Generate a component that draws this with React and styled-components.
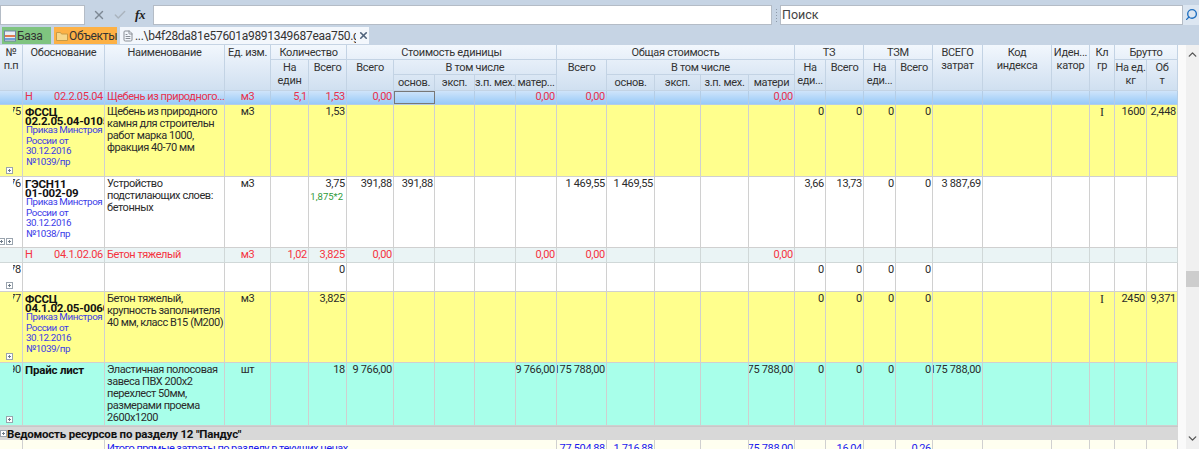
import React from "react";
import styled, { createGlobalStyle } from "styled-components";
import { X, Check, Search, ChevronUp, ChevronDown, FileText } from "lucide-react";

const COLUMNS = [23, 82, 120, 46, 38, 38, 47, 41, 40, 41, 41, 50, 48, 46, 48, 46, 31, 38, 32, 37, 50, 69, 38, 25, 32, 31];
const GRID = COLUMNS.map((w) => `${w}px`).join(" ");

const CLASS_COL = 23;

const TONES = {
  selected: { bg: "linear-gradient(#cfe4fa, #98caf8)", color: "#e8304c", line: "#b4cde6" },
  yellow: { bg: "#ffff8d", color: "#2b2b2b", line: "#d0d0d0" },
  white: { bg: "#fff", color: "#2b2b2b", line: "#d0d0d0" },
  pale: { bg: "#eaf4f5", color: "#f5333f", line: "#d0d8d8" },
  teal: { bg: "#a8ffea", color: "#2b2b2b", line: "#cfcfcf" },
  total: { bg: "#fffff0", color: "#1a1aee", line: "#d0d0d0" },
};

const ROWS = [
  {
    tone: "selected",
    height: 14,
    flagged: "02.2.05.04",
    name: "Щебень из природного...",
    nowrap: true,
    unit: "м3",
    values: { 4: "5,1", 5: "1,53", 6: "0,00", 10: "0,00", 11: "0,00", 15: "0,00" },
    focus: 7,
  },
  {
    tone: "yellow",
    height: 72,
    num: "775",
    plus: 1,
    code: ["ФССЦ", "02.2.05.04-0105"],
    order: ["Приказ Минстроя", "России от", "30.12.2016", "№1039/пр"],
    name: "Щебень из природного камня для строительн работ марка 1000, фракция 40-70 мм",
    unit: "м3",
    values: { 5: "1,53", 16: "0", 17: "0", 18: "0", 19: "0", 23: "I", 24: "1600", 25: "2,448" },
  },
  {
    tone: "white",
    height: 71,
    num: "776",
    plus: 2,
    code: ["ГЭСН11", "01-002-09"],
    order: ["Приказ Минстроя", "России от", "30.12.2016", "№1038/пр"],
    name: "Устройство подстилающих слоев: бетонных",
    unit: "м3",
    values: { 5: "3,75", 6: "391,88", 7: "391,88", 11: "1 469,55", 12: "1 469,55", 16: "3,66", 17: "13,73", 18: "0", 19: "0", 20: "3 887,69" },
    formula: "1,875*2",
  },
  {
    tone: "pale",
    height: 15,
    flagged: "04.1.02.06",
    name: "Бетон тяжелый",
    unit: "м3",
    values: { 4: "1,02", 5: "3,825", 6: "0,00", 10: "0,00", 11: "0,00", 15: "0,00" },
  },
  {
    tone: "white",
    height: 29,
    num: "778",
    plus: 1,
    values: { 5: "0", 16: "0", 17: "0", 18: "0", 19: "0" },
  },
  {
    tone: "yellow",
    height: 71,
    num: "777",
    plus: 1,
    code: ["ФССЦ", "04.1.02.05-0060"],
    order: ["Приказ Минстроя", "России от", "30.12.2016", "№1039/пр"],
    name: "Бетон тяжелый, крупность заполнителя 40\u00a0мм,\u00a0класс\u00a0B15\u00a0(М200)",
    unit: "м3",
    values: { 5: "3,825", 16: "0", 17: "0", 18: "0", 19: "0", 23: "I", 24: "2450", 25: "9,371" },
  },
  {
    tone: "teal",
    height: 63,
    num: "790",
    plus: 1,
    code: ["Прайс лист"],
    name: "Эластичная полосовая завеса ПВХ 200х2 перехлест 50мм, размерами проема 2600х1200",
    unit: "шт",
    values: { 5: "18", 6: "9 766,00", 10: "9 766,00", 11: "175 788,00", 15: "75 788,00", 16: "0", 17: "0", 18: "0", 19: "0", 20: "175 788,00" },
  },
];

const GlobalStyle = createGlobalStyle`
  html, body {
    margin: 0;
    padding: 0;
    height: 449px;
    overflow: hidden;
    background: #fff;
    font-family: Roboto, "Liberation Sans", sans-serif;
    font-size: 11px;
    letter-spacing: -0.3px;
    color: #2b2b2b;
  }
`;

const Page = styled.div`
  width: 1199px;
  height: 449px;
  overflow: hidden;
  display: flex;
  flex-direction: column;
  background: #c6d4e4;
`;

const Toolbar = styled.div`
  height: 26px;
  flex: none;
  display: flex;
  align-items: center;
  padding-top: 3px;
  box-sizing: border-box;
`;

const Field = styled.div`
  width: ${({ $width }) => $width}px;
  height: 20px;
  flex: none;
  box-sizing: border-box;
  background: #fff;
  border: 1px solid #b4bcc6;
  font-size: 12.5px;
  letter-spacing: 0;
  line-height: 18px;
  padding-left: 1px;
  color: #444;
`;

const ToolIcons = styled.div`
  width: 68px;
  flex: none;
  display: flex;
  align-items: center;
  gap: 7px;
  padding-left: 7px;
  box-sizing: border-box;
`;

const Fx = styled.span`
  font-family: "Liberation Serif", serif;
  font-style: italic;
  font-weight: 700;
  font-size: 13px;
  color: #222;
  margin-left: 1px;
`;

const Grip = styled.div`
  width: 8px;
  height: 14px;
  flex: none;
  background: radial-gradient(circle, #8d9aa9 1px, transparent 1px) center top / 3px 3px repeat-y;
`;

const SearchButton = styled.div`
  width: 16px;
  height: 20px;
  flex: none;
  display: flex;
  align-items: center;
  justify-content: center;
  background: #dce6f1;
  color: #1f6fc0;
  svg {
    transform: scaleX(-1);
  }
`;

const TabBar = styled.div`
  height: 19px;
  flex: none;
  display: flex;
  align-items: flex-start;
  gap: 3px;
  padding: 1px 0 0 2px;
  box-sizing: border-box;
`;

const Tab = styled.div`
  height: 17px;
  width: ${({ $width }) => $width}px;
  box-sizing: border-box;
  display: flex;
  align-items: center;
  gap: 1px;
  padding-left: 2px;
  font-size: 12px;
  letter-spacing: -0.3px;
  white-space: nowrap;
  overflow: hidden;
  background: ${({ $bg }) => $bg};
  color: #333;
  > svg {
    flex: none;
  }
`;

const TabIcon = styled.svg`
  width: 12px;
  height: 12px;
  flex: none;
`;

const TabTitle = styled.span`
  width: 221px;
  flex: none;
  overflow: hidden;
`;

const TabClose = styled.span`
  display: flex;
  margin-left: 1px;
  color: #50647c;
`;

const Body = styled.div`
  display: flex;
  flex: 1;
  min-height: 0;
  background: #fff;
`;

const Sheet = styled.div`
  width: 1178px;
  flex: none;
  overflow: hidden;
`;

const Side = styled.div`
  flex: 1;
  display: flex;
  justify-content: flex-end;
  background: #fafafa;
`;

const ScrollBar = styled.div`
  width: 13px;
  background: #f0f0f0;
  display: flex;
  flex-direction: column;
  align-items: center;
  justify-content: space-between;
  padding: 3px 0 4px;
  box-sizing: border-box;
  position: relative;
  color: #555;
`;

const Thumb = styled.div`
  position: absolute;
  left: 0;
  right: 0;
  top: 226px;
  height: 16px;
  background: #cdcdcd;
`;

const Head = styled.div`
  display: grid;
  grid-template-columns: ${GRID};
  grid-template-rows: 15px 15px 16px;
  background: linear-gradient(#f2f7fd, #cfdff0);
`;

const HeadCell = styled.div`
  grid-column: ${({ $col, $span = 1 }) => `${$col} / span ${$span}`};
  grid-row: ${({ $row, $rows = 1 }) => `${$row} / span ${$rows}`};
  box-sizing: border-box;
  border-right: 1px solid #c3d3e4;
  border-bottom: 1px solid #c3d3e4;
  text-align: center;
  line-height: 12.6px;
  padding-top: 2px;
  white-space: nowrap;
  overflow: hidden;
  color: #333;
`;

const Row = styled.div`
  display: grid;
  grid-template-columns: ${GRID};
  height: ${({ $height }) => $height}px;
  box-sizing: border-box;
  background: ${({ $tone }) => TONES[$tone].bg};
  color: ${({ $tone }) => TONES[$tone].color};
  border-bottom: 1px solid ${({ $tone }) => TONES[$tone].line};
`;

const Cell = styled.div`
  box-sizing: border-box;
  min-width: 0;
  overflow: hidden;
  position: relative;
  grid-column: span ${({ $span = 1 }) => $span};
  border-right: 1px solid ${({ $tone }) => TONES[$tone].line};
  display: flex;
  flex-direction: column;
  align-items: ${({ $align }) => ($align === "center" ? "center" : $align === "left" ? "flex-start" : "flex-end")};
  padding: ${({ $compact }) => ($compact ? "0 1px" : "1px 1px 0")};
  line-height: 12px;
  white-space: nowrap;
  outline: ${({ $focus }) => ($focus ? "1px solid #777" : "none")};
  outline-offset: -1px;
`;

const CodeCell = styled(Cell)`
  padding-left: 2px;
`;

const NumText = styled.span`
  margin-left: 14px;
  width: 8px;
  display: flex;
  justify-content: flex-end;
  overflow: hidden;
`;

const Plus = styled.div`
  position: absolute;
  bottom: 2px;
  right: ${({ $right }) => $right}px;
  width: 5px;
  height: 5px;
  border: 1px solid #9aa4ae;
  background:
    linear-gradient(#6f7c8a, #6f7c8a) center / 3px 1px no-repeat,
    linear-gradient(#6f7c8a, #6f7c8a) center / 1px 3px no-repeat,
    #fff;
`;

const Flagged = styled.div`
  width: 100%;
  display: flex;
  justify-content: space-between;
`;

const CodeLines = styled.div`
  font-weight: 700;
  font-size: 11.5px;
  letter-spacing: -0.2px;
  line-height: 9px;
  padding-top: 2px;
  color: #111;
`;

const Order = styled.div`
  color: #3a3ae8;
  font-size: 9.8px;
  letter-spacing: -0.4px;
  line-height: 10.7px;
  padding-left: 1px;
  margin-top: -1px;
`;

const Name = styled.div`
  white-space: ${({ $nowrap }) => ($nowrap ? "nowrap" : "normal")};
  line-height: 11.9px;
  letter-spacing: -0.45px;
  width: 117px;
  padding-left: 1px;
  box-sizing: border-box;
`;

const Formula = styled.div`
  color: #2e9a3a;
  font-size: 9.5px;
  letter-spacing: 0;
  line-height: 11px;
  padding: 1px 2px 0 0;
`;

const ClassMark = styled.span`
  font-family: "Liberation Serif", serif;
  font-size: 12px;
  letter-spacing: 0;
`;

const GroupRow = styled.div`
  height: 14px;
  box-sizing: border-box;
  background: #d8d8d8;
  border-top: 1px solid #c8c8c8;
  display: flex;
  align-items: center;
  font-weight: 700;
  font-size: 11.5px;
  letter-spacing: -0.2px;
  color: #111;
  white-space: nowrap;
`;

const GroupPlus = styled(Plus)`
  position: static;
  flex: none;
`;

const TotalCell = styled(Cell)`
  padding-top: 3px;
`;

const TotalName = styled(TotalCell)`
  letter-spacing: -0.55px;
  padding-left: 2px;
`;

const Header = () => (
  <Head>
    <HeadCell $col={1} $row={1} $rows={3}>№<br />п.п</HeadCell>
    <HeadCell $col={2} $row={1} $rows={3}>Обоснование</HeadCell>
    <HeadCell $col={3} $row={1} $rows={3}>Наименование</HeadCell>
    <HeadCell $col={4} $row={1} $rows={3}>Ед. изм.</HeadCell>
    <HeadCell $col={5} $span={2} $row={1}>Количество</HeadCell>
    <HeadCell $col={5} $row={2} $rows={2}>На<br />един</HeadCell>
    <HeadCell $col={6} $row={2} $rows={2}>Всего</HeadCell>
    <HeadCell $col={7} $span={5} $row={1}>Стоимость единицы</HeadCell>
    <HeadCell $col={7} $row={2} $rows={2}>Всего</HeadCell>
    <HeadCell $col={8} $span={4} $row={2}>В том числе</HeadCell>
    <HeadCell $col={8} $row={3}>основ.</HeadCell>
    <HeadCell $col={9} $row={3}>эксп.</HeadCell>
    <HeadCell $col={10} $row={3}>з.п. мех.</HeadCell>
    <HeadCell $col={11} $row={3}>матер...</HeadCell>
    <HeadCell $col={12} $span={5} $row={1}>Общая стоимость</HeadCell>
    <HeadCell $col={12} $row={2} $rows={2}>Всего</HeadCell>
    <HeadCell $col={13} $span={4} $row={2}>В том числе</HeadCell>
    <HeadCell $col={13} $row={3}>основ.</HeadCell>
    <HeadCell $col={14} $row={3}>эксп.</HeadCell>
    <HeadCell $col={15} $row={3}>з.п. мех.</HeadCell>
    <HeadCell $col={16} $row={3}>матери</HeadCell>
    <HeadCell $col={17} $span={2} $row={1}>ТЗ</HeadCell>
    <HeadCell $col={17} $row={2} $rows={2}>На<br />еди...</HeadCell>
    <HeadCell $col={18} $row={2} $rows={2}>Всего</HeadCell>
    <HeadCell $col={19} $span={2} $row={1}>ТЗМ</HeadCell>
    <HeadCell $col={19} $row={2} $rows={2}>На<br />еди...</HeadCell>
    <HeadCell $col={20} $row={2} $rows={2}>Всего</HeadCell>
    <HeadCell $col={21} $row={1} $rows={3}>ВСЕГО<br />затрат</HeadCell>
    <HeadCell $col={22} $row={1} $rows={3}>Код<br />индекса</HeadCell>
    <HeadCell $col={23} $row={1} $rows={3}>Иден...<br />катор</HeadCell>
    <HeadCell $col={24} $row={1} $rows={3}>Кл<br />гр</HeadCell>
    <HeadCell $col={25} $span={2} $row={1}>Брутто</HeadCell>
    <HeadCell $col={25} $row={2} $rows={2}>На ед.<br />кг</HeadCell>
    <HeadCell $col={26} $row={2} $rows={2}>Об<br />т</HeadCell>
  </Head>
);

const PlusMarks = ({ count }) => (
  <>
    {count >= 1 && <Plus $right={9} />}
    {count >= 2 && <Plus $right={17} />}
  </>
);

const DataRow = ({ row }) => {
  const { tone } = row;
  return (
    <Row $tone={tone} $height={row.height}>
      <Cell $tone={tone}>
        {row.num && <NumText>{row.num}</NumText>}
        {row.plus && <PlusMarks count={row.plus} />}
      </Cell>
      <CodeCell $tone={tone} $align="left" $compact={row.nowrap}>
        {row.flagged && (
          <Flagged>
            <span>Н</span>
            <span>{row.flagged}</span>
          </Flagged>
        )}
        {row.code && (
          <CodeLines>
            {row.code.map((line) => <div key={line}>{line}</div>)}
          </CodeLines>
        )}
        {row.order && (
          <Order>
            {row.order.map((line) => <div key={line}>{line}</div>)}
          </Order>
        )}
      </CodeCell>
      <Cell $tone={tone} $align="left" $compact={row.nowrap}>
        {row.name && <Name $nowrap={row.nowrap}>{row.name}</Name>}
      </Cell>
      <Cell $tone={tone} $align="center" $compact={row.nowrap}>{row.unit}</Cell>
      {COLUMNS.slice(4).map((_, i) => {
        const col = i + 4;
        if (col === CLASS_COL) {
          return (
            <Cell key={col} $tone={tone} $align="center" $compact={row.nowrap}>
              <ClassMark>{row.values[col]}</ClassMark>
            </Cell>
          );
        }
        return (
          <Cell key={col} $tone={tone} $align="right" $focus={row.focus === col} $compact={row.nowrap}>
            {row.values[col]}
            {col === 5 && row.formula && <Formula>{row.formula}</Formula>}
          </Cell>
        );
      })}
    </Row>
  );
};

const TotalRow = () => {
  const values = { 11: "77 504,88", 12: "1 716,88", 15: "75 788,00", 17: "16,04", 19: "0,26" };
  return (
    <Row $tone="total" $height={20}>
      <Cell $tone="total" />
      <Cell $tone="total" />
      <TotalName $tone="total" $align="left" $span={9}>
        Итого прямые затраты по разделу в текущих ценах
      </TotalName>
      {COLUMNS.slice(11).map((_, i) => (
        <TotalCell key={i} $tone="total">{values[i + 11]}</TotalCell>
      ))}
    </Row>
  );
};

export default function App() {
  return (
    <Page>
      <GlobalStyle />
      <Toolbar>
        <Field $width={85} />
        <ToolIcons>
          <X size={14} strokeWidth={2.5} color="#7d8894" />
          <Check size={14} strokeWidth={2.5} color="#aab4be" />
          <Fx>fx</Fx>
        </ToolIcons>
        <Field $width={619} />
        <Grip />
        <Field $width={403}>Поиск</Field>
        <SearchButton>
          <Search size={13} strokeWidth={2.5} />
        </SearchButton>
      </Toolbar>
      <TabBar>
        <Tab $width={49} $bg="#7fc47f">
          <TabIcon viewBox="0 0 12 12">
            <rect x="0.5" y="1" width="11" height="10" fill="#e8eef6" stroke="#6f86a8" />
            <rect x="1" y="5" width="10" height="2" fill="#e07a50" />
            <rect x="1" y="8" width="10" height="2" fill="#6f9fd8" />
          </TabIcon>
          База
        </Tab>
        <Tab $width={63} $bg="#fdb145">
          <TabIcon viewBox="0 0 12 12">
            <path d="M0.5 2.5h4l1 1.5h6v6.5h-11z" fill="#f6d78a" stroke="#c79a45" />
          </TabIcon>
          Объекты
        </Tab>
        <Tab $width={249} $bg="#f3f7fc">
          <FileText size={12} color="#8a8f96" />
          <TabTitle>...\b4f28da81e57601a9891349687eaa750.gs</TabTitle>
          <TabClose>
            <X size={11} strokeWidth={3.5} />
          </TabClose>
        </Tab>
      </TabBar>
      <Body>
        <Sheet>
          <Header />
          {ROWS.map((row, i) => (
            <DataRow key={i} row={row} />
          ))}
          <GroupRow>
            <GroupPlus />
            Ведомость ресурсов по разделу 12 "Пандус"
          </GroupRow>
          <TotalRow />
        </Sheet>
        <Side>
          <ScrollBar>
            <ChevronUp size={13} strokeWidth={2.5} />
            <Thumb />
            <ChevronDown size={13} strokeWidth={2.5} />
          </ScrollBar>
        </Side>
      </Body>
    </Page>
  );
}
